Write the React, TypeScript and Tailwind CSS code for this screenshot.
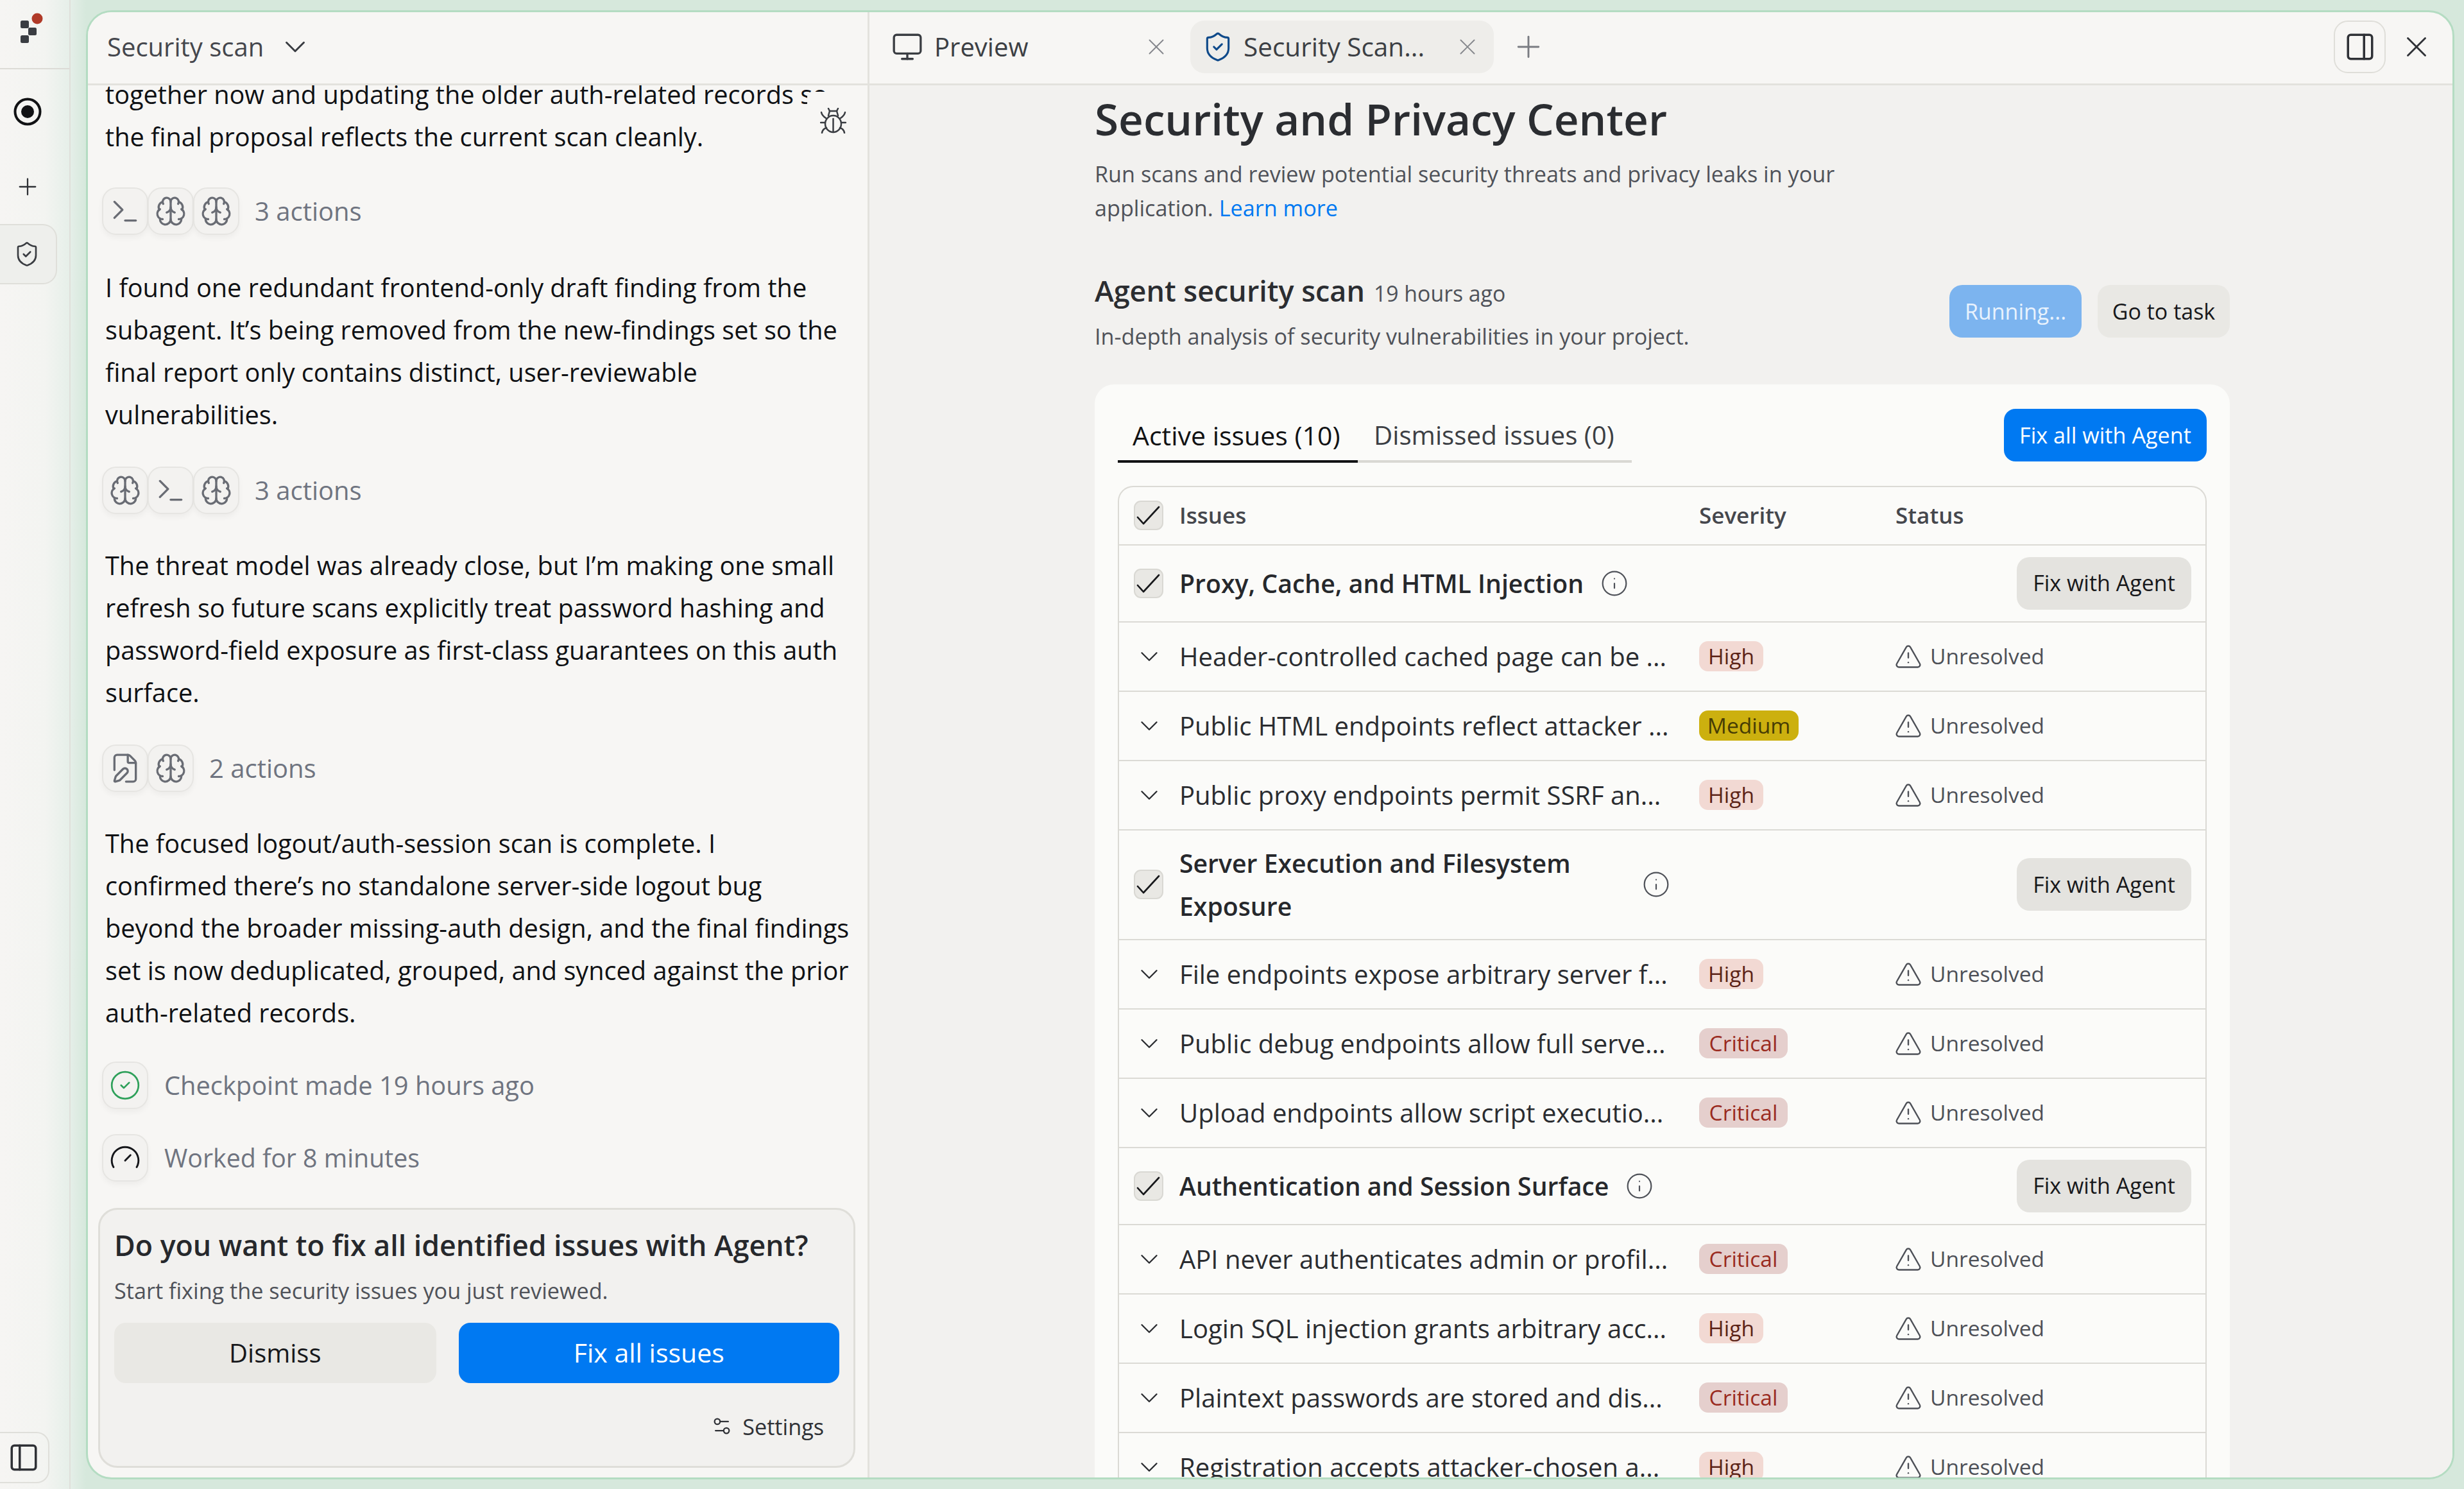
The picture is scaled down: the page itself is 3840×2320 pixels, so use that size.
import React from 'react';
import { Terminal, Brain, FilePen, ChevronDown, X, Plus, Monitor, ShieldCheck, PanelRight, PanelLeft, Info, TriangleAlert, Settings2, Gauge, CircleCheck } from 'lucide-react';

const Check = () => (
  <svg width="46" height="46" viewBox="0 0 46 46" fill="none" className="block">
    <path d="M6 26 L15 36 L39 10" stroke="#17181b" strokeWidth="2.6" strokeLinecap="round" strokeLinejoin="round" />
  </svg>
);

const Box = () => (
  <span className="block w-[46px] h-[46px] shrink-0 rounded-[11px] border-[2px] border-[#d9d8d3] bg-[#e9e8e4] overflow-hidden"><span className="block -m-[2px]"><Check /></span></span>
);

const Pill = ({ children }: { children: React.ReactNode }) => (
  <span className="flex items-center justify-center w-[72px] h-[74px] -ml-[1px] first:ml-0 rounded-[22px] border-[2px] border-[#e6e5e2] bg-[#f3f2f0] text-[#696c74] shadow-[0_5px_9px_rgba(0,0,0,0.04)]">{children}</span>
);

const BugIcon = () => (
  <svg width="41" height="40" viewBox="0 0 41 40" fill="none" stroke="#3a3d42" strokeWidth="2.5" strokeLinecap="round" strokeLinejoin="round">
    <ellipse cx="20.5" cy="25" rx="12.5" ry="13" />
    <path d="M20.5 17 V38" />
    <path d="M13 12 L15 5 H26 L28 12" />
    <path d="M13 1 L15 5 M28 1 L26 5" />
    <path d="M2 7 Q3 12 9 16 M39 7 Q38 12 32 16" />
    <path d="M1 23 H8 M33 23 H40" />
    <path d="M3 39 Q4 33 10 31 M38 39 Q37 33 31 31" />
  </svg>
);

const T = () => <Terminal size={50} strokeWidth={1.6} />;
const B = () => <Brain size={50} strokeWidth={1.6} />;
const F = () => <FilePen size={50} strokeWidth={1.6} />;

const Actions = ({ icons, label }: { icons: React.ReactNode[]; label: string }) => (
  <div className="flex items-center ml-[-5px] h-[74px]">
    {icons.map((ic, i) => <Pill key={i}>{ic}</Pill>)}
    <span className="ml-[24px] text-[40px] text-[#6f7480] leading-none">{label}</span>
  </div>
);

const Para = ({ className = '', children }: { className?: string; children: React.ReactNode }) => (
  <p className={`shrink-0 text-[39.7px] leading-[66px] text-[#0f1114] whitespace-nowrap ${className}`}>{children}</p>
);

const GrayBtn = ({ children }: { children: React.ReactNode }) => (
  <span className="flex items-center justify-center w-[272px] h-[82px] rounded-[20px] bg-[#e4e3df] text-[34px] text-[#17181b]">{children}</span>
);

const InfoI = () => <Info size={44} strokeWidth={1.2} className="text-[#4f5259]" />;

const Group = ({ title, tall }: { title: React.ReactNode; tall?: boolean }) => (
  <div className={`flex items-center border-b-[2.5px] border-[#dbdad5] ${tall ? 'h-[171px]' : 'h-[120px]'}`}>
    <span className="ml-[23px] mr-[25px]"><Box /></span>
    <span className={`text-[39.2px] leading-[67px] font-semibold text-[#26282c] whitespace-nowrap ${tall ? 'w-[703px]' : ''}`}>{title}</span>
    <span className={tall ? 'ml-[18px]' : 'ml-[26px]'}><InfoI /></span>
    <span className="ml-auto mr-[22px]"><GrayBtn>Fix with Agent</GrayBtn></span>
  </div>
);

const sev: Record<string, string> = {
  High: 'w-[100px] bg-[#f2d9d3] text-[#5c2317]',
  Medium: 'w-[155px] bg-[#ccb00f] text-[#473c04]',
  Critical: 'w-[138px] bg-[#e5cfcd] text-[#9a2b1f]',
};

const Row = ({ title, s }: { title: string; s: string }) => (
  <div className="grid grid-cols-[94px_810px_306px_1fr] items-center h-[108px] border-b-[2.5px] border-[#dbdad5]">
    <span className="flex justify-center text-[#2a2c30]"><ChevronDown size={46} strokeWidth={1.2} /></span>
    <span className="text-[40px] text-[#2a2c30] whitespace-nowrap">{title}</span>
    <span className={`flex items-center justify-center h-[47px] rounded-[14px] text-[33.5px] ${sev[s]}`}>{s}</span>
    <span className="flex items-center text-[33.5px] text-[#4d5057]">
      <TriangleAlert size={44} strokeWidth={1.3} className="-ml-[2px] mr-[12px]" />
      Unresolved
    </span>
  </div>
);

export default function App() {
  return (
    <div className="flex w-[3840px] h-[2320px] overflow-hidden font-['Open_Sans',sans-serif] bg-[linear-gradient(90deg,#f6f5f3_0px,#f3f4f1_70px,#e6efe9_108px,#d6e8dc_134px)]">
      {/* rail */}
      <aside className="flex flex-col w-[110px] shrink-0 border-r-[2px] border-[#dfdfda]">
        <div className="h-[108px] shrink-0 border-b-[2px] border-[#dcdbd6] flex items-center justify-center">
          <svg width="40" height="52" viewBox="0 0 40 52" className="-mt-[14px] -ml-[9px]">
            <rect x="2" y="12" width="13" height="12" rx="2.5" fill="#3a3d42" />
            <rect x="14" y="23" width="13" height="12" rx="2.5" fill="#3a3d42" />
            <rect x="2" y="35" width="13" height="12" rx="2.5" fill="#3a3d42" />
            <circle cx="28" cy="9" r="8.5" fill="#b03a28" />
          </svg>
        </div>
        <div className="flex flex-col flex-1 items-start">
          <div className="flex justify-center w-[86px] mt-[44px]">
            <svg width="44" height="44" viewBox="0 0 44 44">
              <circle cx="22" cy="22" r="19.5" fill="none" stroke="#111214" strokeWidth="4" />
              <circle cx="22" cy="22" r="10" fill="#111214" />
            </svg>
          </div>
          <div className="flex justify-center w-[86px] mt-[74px] text-[#2f3136]"><Plus size={42} strokeWidth={1.3} /></div>
          <div className="flex items-center justify-center w-[89px] h-[94px] mt-[37px] rounded-r-[22px] border-[2px] border-l-0 border-[#dfdfda] bg-[#eeefec] text-[#3a3d42] pr-[4px]"><ShieldCheck size={42} strokeWidth={1.5} /></div>
          <div className="flex items-center justify-center w-[77px] h-[80px] mt-auto mb-[9px] rounded-r-[20px] border-[2px] border-l-0 border-[#dfdfda] text-[#2f3136] pr-[2px]"><PanelLeft size={50} strokeWidth={1.7} /></div>
        </div>
      </aside>

      {/* window */}
      <div className="flex ml-[24px] mt-[16px] mb-[15px] w-[3691px] rounded-[40px] border-[3px] border-[#b4dcc2] overflow-hidden bg-[#f7f6f4]">
        {/* left panel */}
        <section className="flex flex-col w-[1218px] shrink-0 border-r-[3px] border-[#e3e2dd]">
          <header className="flex items-center h-[114px] shrink-0 border-b-[3px] border-[#e3e2dd] pl-[30px] pb-[3px] z-10 bg-[#f7f6f4]">
            <span className="text-[40px] text-[#45474d]">Security scan</span>
            <ChevronDown size={54} strokeWidth={1.3} className="ml-[22px] text-[#3a3d42]" />
          </header>
          <div className="relative flex-1 overflow-hidden">
            <div className="absolute left-[1121px] top-[10px] w-[90px] h-[78px] rounded-[8px] bg-[#f7f6f4] flex items-center justify-center pr-[10px] pt-[12px]"><BugIcon /></div>
            <div className="flex flex-col h-full pl-[27px] -mt-[19px]">
              <Para>together now and updating the older auth-related records so<br />the final proposal reflects the current scan cleanly.</Para>
              <div className="mt-[46px]"><Actions icons={[<T />, <B />, <B />]} label="3 actions" /></div>
              <Para className="mt-[49px]">I found one redundant frontend-only draft finding from the<br />subagent. It’s being removed from the new-findings set so the<br />final report only contains distinct, user-reviewable<br />vulnerabilities.</Para>
              <div className="mt-[48px]"><Actions icons={[<B />, <T />, <B />]} label="3 actions" /></div>
              <Para className="mt-[47px]">The threat model was already close, but I’m making one small<br />refresh so future scans explicitly treat password hashing and<br />password-field exposure as first-class guarantees on this auth<br />surface.</Para>
              <div className="mt-[48px]"><Actions icons={[<F />, <B />]} label="2 actions" /></div>
              <Para className="mt-[47px]">The focused logout/auth-session scan is complete. I<br />confirmed there’s no standalone server-side logout bug<br />beyond the broader missing-auth design, and the final findings<br />set is now deduplicated, grouped, and synced against the prior<br />auth-related records.</Para>
              <div className="flex items-center mt-[43px] ml-[-5px]">
                <Pill><CircleCheck size={50} strokeWidth={1.3} className="text-[#2ea05a]" /></Pill>
                <span className="ml-[25px] text-[39.8px] text-[#6f7480]">Checkpoint made 19 hours ago</span>
              </div>
              <div className="flex items-center mt-[39px] ml-[-5px]">
                <Pill><Gauge size={50} strokeWidth={1.4} className="text-[#15161a]" /></Pill>
                <span className="ml-[25px] text-[39.3px] text-[#6f7480]">Worked for 8 minutes</span>
              </div>
              <div className="flex flex-col shrink-0 mt-[41px] ml-[-11px] w-[1180px] h-[405px] rounded-[30px] border-[3px] border-[#dfded9] bg-[#f2f1ef] px-[22px] pt-[25px]">
                <h2 className="text-[44.7px] leading-[60px] font-semibold text-[#26282c] whitespace-nowrap">Do you want to fix all identified issues with Agent?</h2>
                <p className="mt-[18.5px] text-[34.2px] leading-[44px] text-[#4f5259] whitespace-nowrap">Start fixing the security issues you just reviewed.</p>
                <div className="flex gap-[35px] mt-[28.5px]">
                  <span className="flex items-center justify-center w-[502px] h-[94px] rounded-[18px] bg-[#e9e8e4] text-[40px] text-[#17181b]">Dismiss</span>
                  <span className="flex items-center justify-center w-[594px] h-[94px] rounded-[18px] bg-[#0079f2] text-[41px] text-white">Fix all issues</span>
                </div>
                <div className="flex items-center justify-end mt-[41.5px] pr-[24px] text-[34.2px] text-[#2f3136]">
                  <Settings2 size={34} strokeWidth={1.6} className="mr-[15px]" />Settings
                </div>
              </div>
            </div>
          </div>
        </section>

        {/* right panel */}
        <section className="flex flex-col flex-1 min-w-0">
          <header className="flex items-center h-[114px] shrink-0 border-b-[3px] border-[#e3e2dd] pb-[3px]">
            <div className="flex items-center w-[478px] h-[82px] pl-[34px] text-[#3a3d42]">
              <Monitor size={50} strokeWidth={1.6} />
              <span className="ml-[17px] text-[40px] text-[#3c3f44]">Preview</span>
              <X size={42} strokeWidth={1.1} className="ml-auto mr-[10px] text-[#85878c]" />
            </div>
            <div className="flex items-center w-[473px] h-[82px] ml-[22px] pl-[18px] rounded-[22px] bg-[#eeedea]">
              <ShieldCheck size={50} strokeWidth={1.5} className="text-[#0f4a8a]" />
              <span className="ml-[15px] text-[40.5px] text-[#3c3f44] whitespace-nowrap">Security Scan...</span>
              <X size={42} strokeWidth={1.1} className="ml-auto mr-[20px] text-[#85878c]" />
            </div>
            <Plus size={54} strokeWidth={1.3} className="ml-[27px] text-[#7a7c82]" />
            <div className="flex items-center justify-center w-[81px] h-[82px] ml-auto rounded-[22px] border-[2.5px] border-[#dfded9] text-[#2f3136]"><PanelRight size={50} strokeWidth={1.7} /></div>
            <X size={54} strokeWidth={1.25} className="ml-[21px] mr-[29px] text-[#2f3136]" />
          </header>
          <div className="flex-1 overflow-hidden bg-[#f2f1ef] pl-[351px] pt-[9px]">
            <div className="w-[1769px]">
              <h1 className="text-[67.4px] leading-[86px] font-semibold text-[#2b2d31] whitespace-nowrap">Security and Privacy Center</h1>
              <p className="mt-[15.5px] text-[34.2px] leading-[53px] text-[#4f5259] whitespace-nowrap">Run scans and review potential security threats and privacy leaks in your<br />application. <span className="text-[#0079f2]">Learn more</span></p>
              <div className="flex items-center justify-between mt-[73px]">
                <div>
                  <div className="flex items-baseline leading-[60px]">
                    <span className="text-[44.9px] font-semibold text-[#2b2d31]">Agent security scan</span>
                    <span className="ml-[14px] text-[33.8px] text-[#4f5259]">19 hours ago</span>
                  </div>
                  <p className="mt-[10.5px] text-[34.2px] leading-[53px] text-[#4f5259] whitespace-nowrap">In-depth analysis of security vulnerabilities in your project.</p>
                </div>
                <div className="flex gap-[25px] mb-[2px]">
                  <span className="flex items-center justify-center w-[206px] h-[82px] rounded-[20px] bg-[#7cb4ef] text-[34px] text-[#e8f2fd]">Running...</span>
                  <span className="flex items-center justify-center w-[206px] h-[82px] rounded-[20px] bg-[#e9e8e4] text-[34px] text-[#17181b]">Go to task</span>
                </div>
              </div>
              <div className="mt-[48.5px] rounded-t-[30px] bg-[#fbfbf9] px-[36px] pt-[38px]">
                <div className="flex justify-between">
                  <div className="flex w-[801px] h-[84px] border-b-[4px] border-[#d9d8d3]">
                    <div className="w-[374px] h-[84px] border-b-[4px] border-[#111214] pl-[23px] pt-[16px] text-[41px] leading-[50px] text-[#111214] whitespace-nowrap">Active issues (10)</div>
                    <div className="ml-[25px] pt-[16px] text-[40.3px] leading-[50px] text-[#3c3f44] whitespace-nowrap">Dismissed issues (0)</div>
                  </div>
                  <span className="flex items-center justify-center w-[316px] h-[82px] rounded-[18px] bg-[#0079f2] text-[34.2px] text-white">Fix all with Agent</span>
                </div>
                <div className="mt-[36px] rounded-t-[24px] border-[2.5px] border-b-0 border-[#dbdad5]">
                  <div className="grid grid-cols-[94px_810px_306px_1fr] items-center h-[91px] border-b-[2.5px] border-[#dbdad5]">
                    <span className="ml-[23px]"><Box /></span>
                    <span className="text-[35px] font-semibold text-[#45474d]">Issues</span>
                    <span className="text-[35px] font-semibold text-[#45474d]">Severity</span>
                    <span className="text-[35px] font-semibold text-[#45474d]">Status</span>
                  </div>
                  <Group title="Proxy, Cache, and HTML Injection" />
                  <Row title="Header-controlled cached page can be ..." s="High" />
                  <Row title="Public HTML endpoints reflect attacker ..." s="Medium" />
                  <Row title="Public proxy endpoints permit SSRF an..." s="High" />
                  <Group tall title={<>Server Execution and Filesystem<br />Exposure</>} />
                  <Row title="File endpoints expose arbitrary server f..." s="High" />
                  <Row title="Public debug endpoints allow full serve..." s="Critical" />
                  <Row title="Upload endpoints allow script executio..." s="Critical" />
                  <Group title="Authentication and Session Surface" />
                  <Row title="API never authenticates admin or profil..." s="Critical" />
                  <Row title="Login SQL injection grants arbitrary acc..." s="High" />
                  <Row title="Plaintext passwords are stored and dis..." s="Critical" />
                  <Row title="Registration accepts attacker-chosen a..." s="High" />
                </div>
              </div>
            </div>
          </div>
        </section>
      </div>
    </div>
  );
}
